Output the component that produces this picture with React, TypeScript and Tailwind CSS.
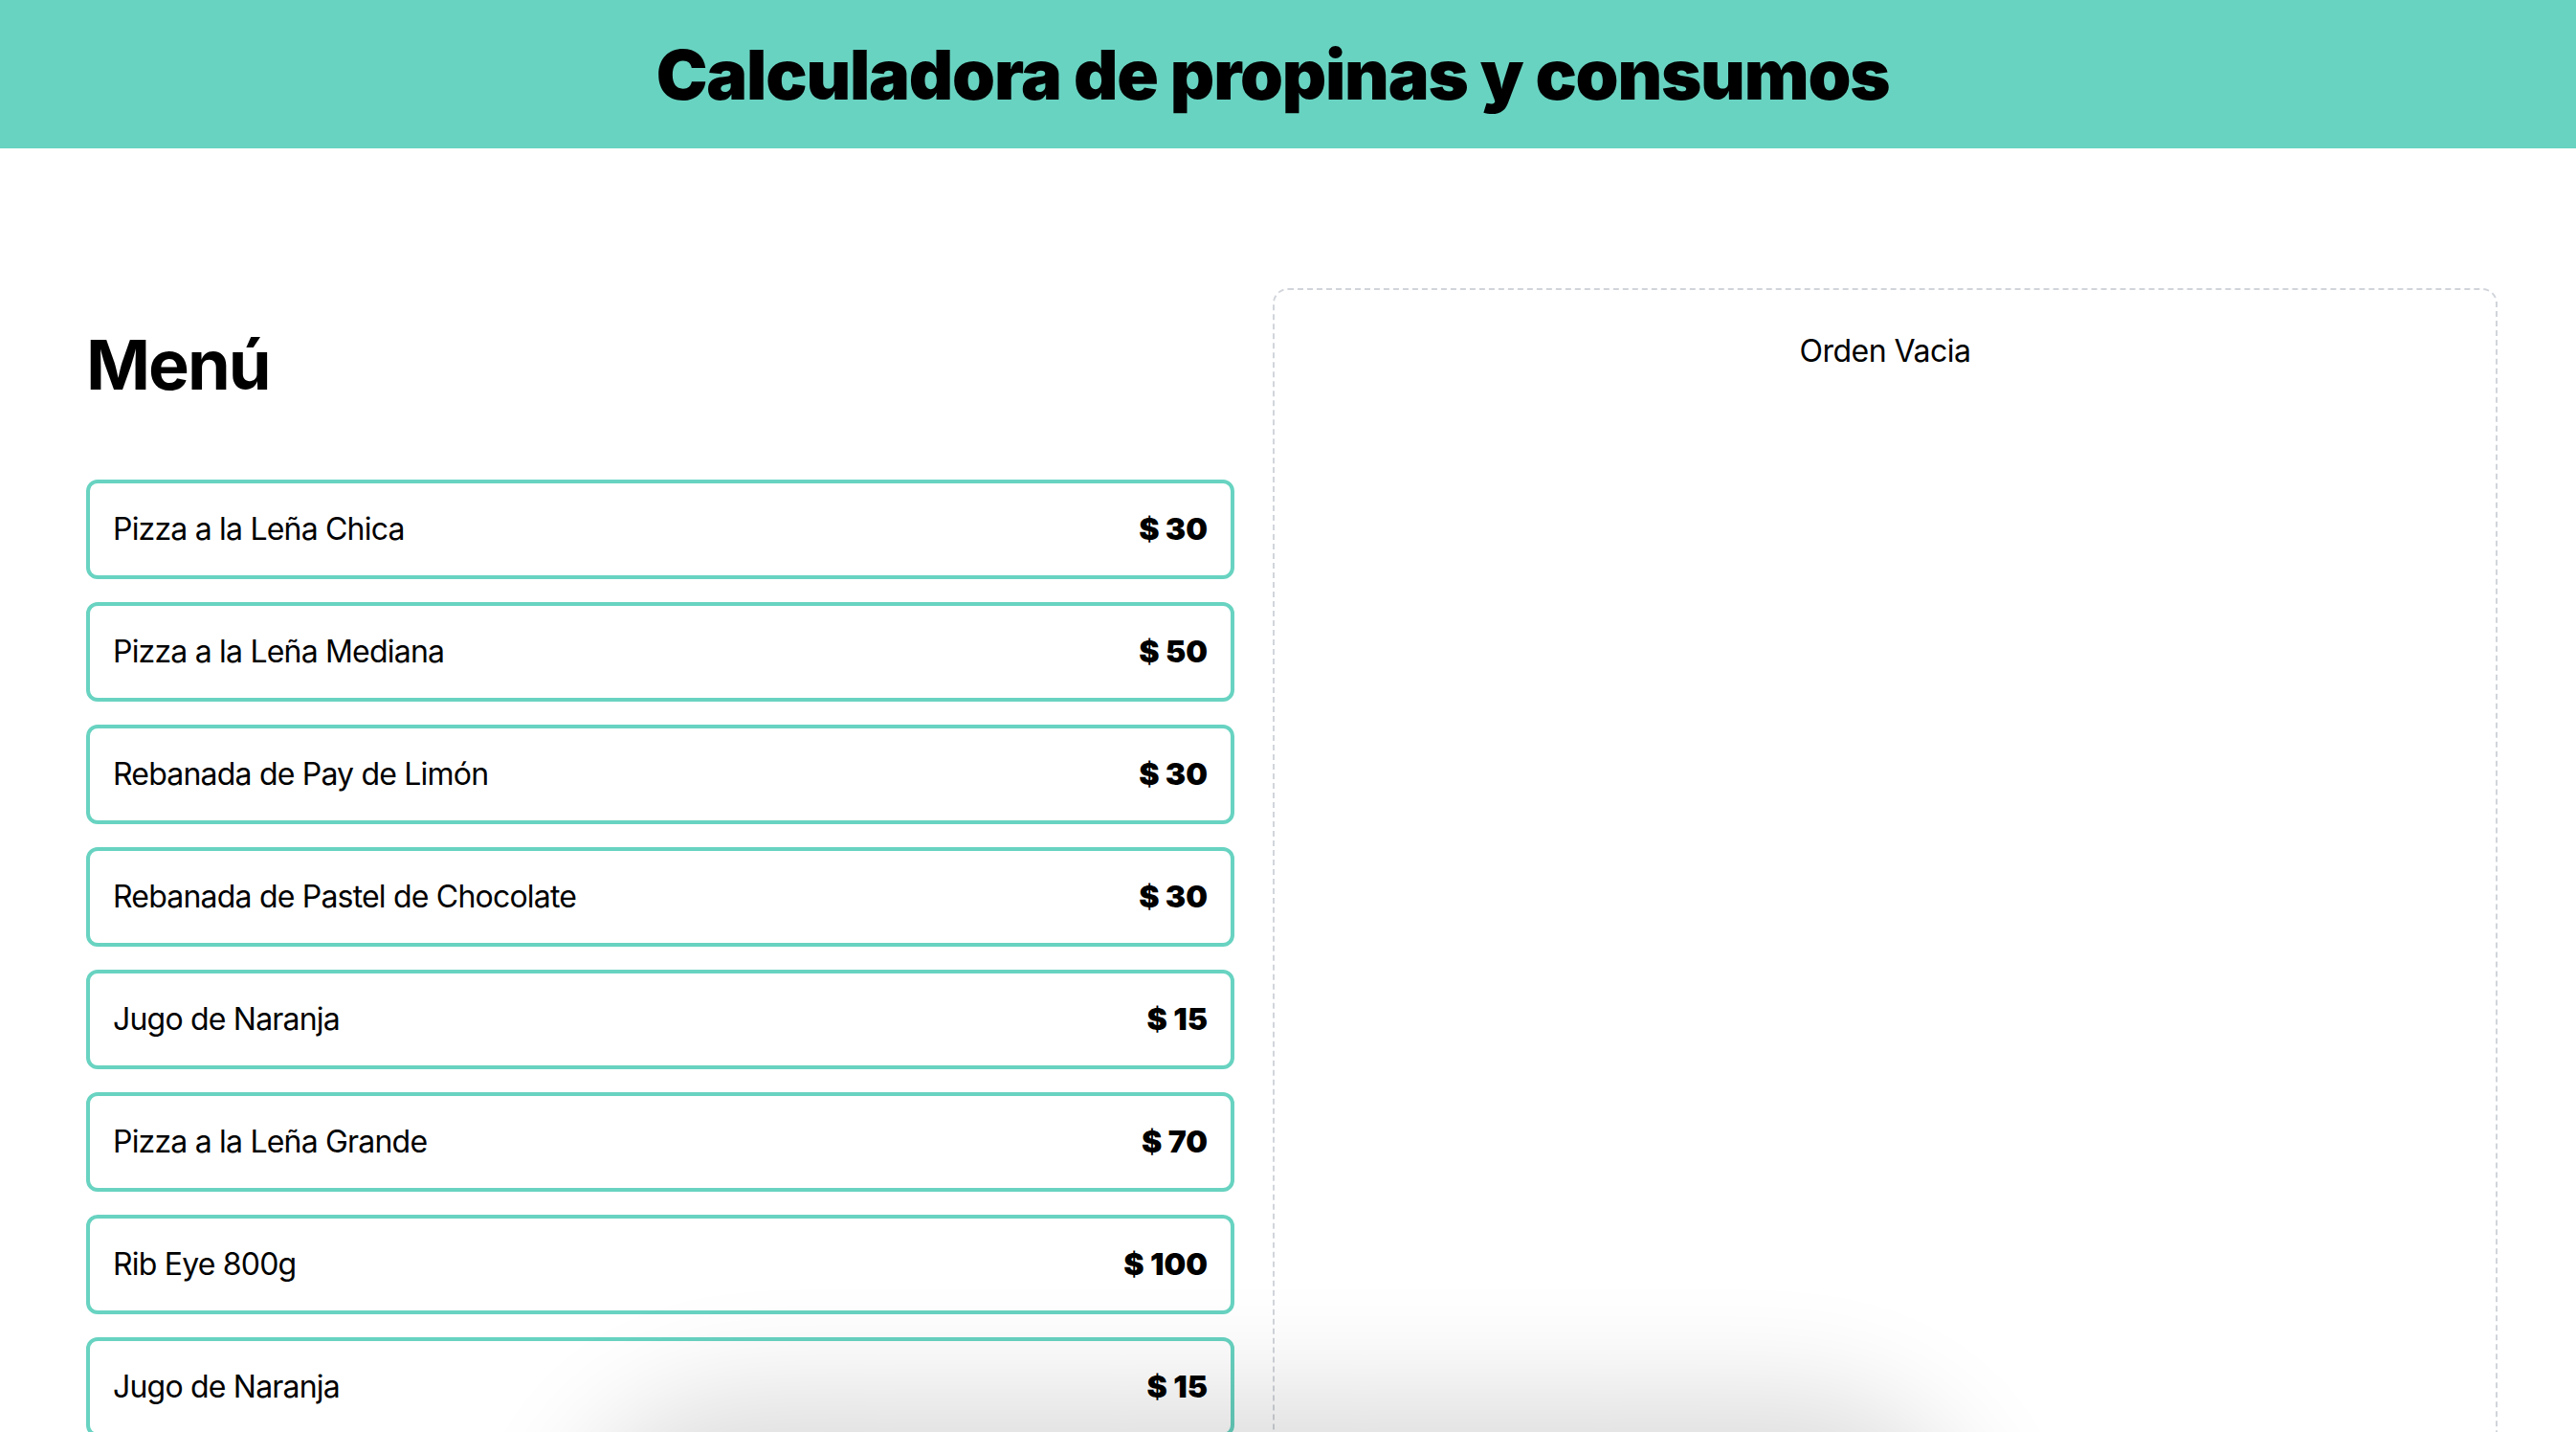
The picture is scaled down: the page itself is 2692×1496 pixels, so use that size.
import React from 'react';

type Item = { id: number; name: string; price: number };

const menuItems: Item[] = [
  { id: 1, name: 'Pizza a la Leña Chica', price: 30 },
  { id: 2, name: 'Pizza a la Leña Mediana', price: 50 },
  { id: 3, name: 'Rebanada de Pay de Limón', price: 30 },
  { id: 4, name: 'Rebanada de Pastel de Chocolate', price: 30 },
  { id: 5, name: 'Jugo de Naranja', price: 15 },
  { id: 6, name: 'Pizza a la Leña Grande', price: 70 },
  { id: 7, name: 'Rib Eye 800g', price: 100 },
  { id: 8, name: 'Jugo de Naranja', price: 15 },
  { id: 9, name: 'Refresco', price: 10 },
  { id: 10, name: 'Café Americano', price: 20 },
];

const MenuItem = ({ item }: { item: Item }) => (
  <button className="flex w-full items-center justify-between rounded-[12px] border-[4px] border-[#68d3c1] bg-white px-[24px] py-[24px] text-left text-[32px] leading-[48px] text-black">
    <p className="tracking-[-0.8px]">{item.name}</p>
    <p className="font-black">$ {item.price}</p>
  </button>
);

export default function App() {
  return (
    <div className="min-h-screen bg-white text-black" style={{ fontFamily: 'Inter, "Liberation Sans", sans-serif' }}>
      <header className="flex h-[155px] items-center justify-center bg-[#68d3c1] pr-[32px]">
        <h1 className="text-[72px] leading-[80px] font-black tracking-[-1.2px]">Calculadora de propinas y consumos</h1>
      </header>

      <main className="ml-[50px] mt-[146px] grid w-[2560px] grid-cols-2 pb-[80px]">
        <div className="p-[40px]">
          <h2 className="text-[72px] leading-[80px] font-bold tracking-[-2px]">Menú</h2>
          <div className="mt-[80px] flex flex-col gap-[24px]">
            {menuItems.map((item) => (
              <MenuItem key={item.id} item={item} />
            ))}
          </div>
        </div>

        <div className="rounded-[16px] border-[2px] border-dashed border-[#d1d5db] p-[40px]">
          <p className="text-center text-[32px] leading-[48px] tracking-[-0.5px]">Orden Vacia</p>
        </div>
      </main>

      {/* sombra del panel flotante bajo el pliegue */}
      <div className="pointer-events-none fixed bottom-[-300px] left-[630px] h-[300px] w-[1400px] rounded-full bg-white shadow-[0_0_120px_40px_rgba(0,0,0,0.14)]" />
    </div>
  );
}
